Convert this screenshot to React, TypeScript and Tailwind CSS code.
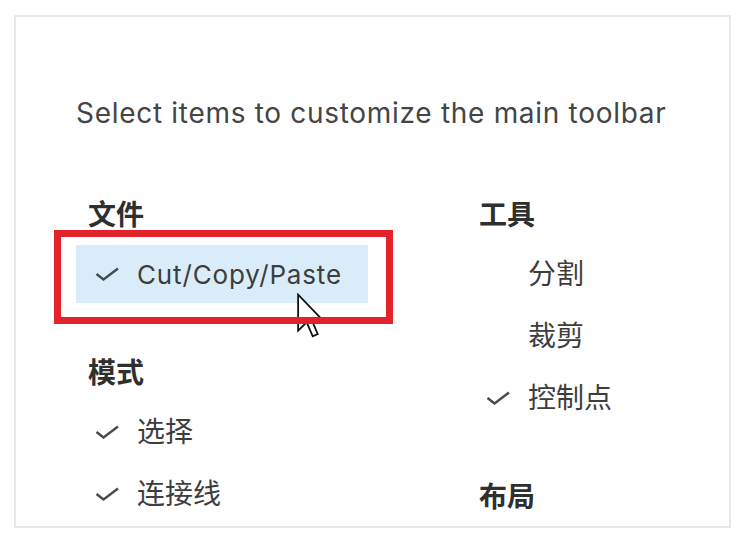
import React from "react";

const Check = () => (
  <svg width="25" height="14" viewBox="0 0 25 14" className="shrink-0">
    <polyline points="1.5,7 8.5,12.5 23,1.5" fill="none" stroke="#4a4a4a" strokeWidth="2.4" strokeLinejoin="miter" />
  </svg>
);

type Item = { label: string; checked: boolean; active?: boolean; latin?: boolean };

const Group = ({ title, items }: { title: string; items: Item[] }) => (
  <div className="flex flex-col">
    <div className="h-[52px] flex items-center pl-[12px] text-[28px] font-bold text-[#2f2f2f]">{title}</div>
    {items.map((it) => (
      <div
        key={it.label}
        className={`mt-[4px] h-[58px] w-[292px] flex items-center pl-[19px] gap-[17px] ${it.active ? "bg-[#d8edf9]" : ""}`}
      >
        <div className="w-[25px] shrink-0 flex items-center">{it.checked ? <Check /> : null}</div>
        <span
          className={`text-[#3d3d3d] whitespace-nowrap ${it.latin ? "text-[26px] tracking-[0.85px]" : "text-[28px]"}`}
        >
          {it.label}
        </span>
      </div>
    ))}
  </div>
);

export default function App() {
  return (
    <div
      className="relative w-[741px] h-[538px] bg-white overflow-hidden"
      style={{ fontFamily: 'Inter, "Noto Sans CJK SC", sans-serif' }}
    >
      <div className="ml-[14px] mt-[15px] w-[717px] h-[513px] border-2 border-[#e8e8e8] overflow-hidden pl-[60px] pt-[79px]">
        <p className="text-[28px] leading-[34px] tracking-[0.7px] text-[#454545] whitespace-nowrap">
          Select items to customize the main toolbar
        </p>
        <div className="mt-[59px] flex">
          <div className="w-[391px] shrink-0 flex flex-col gap-[44px]">
            <Group title="文件" items={[{ label: "Cut/Copy/Paste", checked: true, active: true, latin: true }]} />
            <Group
              title="模式"
              items={[
                { label: "选择", checked: true },
                { label: "连接线", checked: true },
              ]}
            />
          </div>
          <div className="w-[391px] shrink-0 flex flex-col gap-[44px]">
            <Group
              title="工具"
              items={[
                { label: "分割", checked: false },
                { label: "裁剪", checked: false },
                { label: "控制点", checked: true },
              ]}
            />
            <Group title="布局" items={[]} />
          </div>
        </div>
      </div>
      <svg className="absolute left-[297px] top-[293px]" width="27" height="46" viewBox="0 0 12 20">
        <path
          d="M0.5,0.5 L0.5,16.5 L4.3,12.8 L7,19 L9.2,18 L6.6,11.9 L11.5,11.9 Z"
          fill="white"
          stroke="#111"
          strokeWidth="0.8"
          strokeLinejoin="miter"
        />
      </svg>
      <div className="absolute left-[54px] top-[230px] w-[339px] h-[94px] border-[7px] border-[#e3232b]" />
    </div>
  );
}
